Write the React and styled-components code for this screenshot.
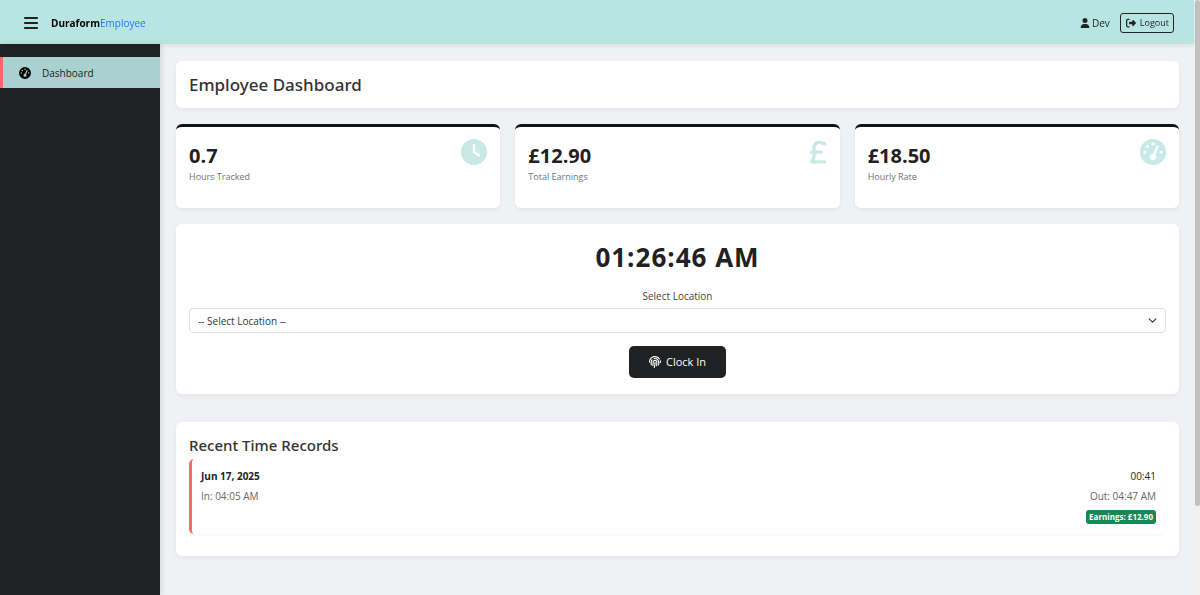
import React from 'react';
import styled, { createGlobalStyle } from 'styled-components';
import {
  FaBars,
  FaUser,
  FaRightFromBracket,
  FaGaugeHigh,
  FaClock,
} from 'react-icons/fa6';
import { FaFingerprint } from 'react-icons/fa';

const GlobalStyle = createGlobalStyle`
  *, *::before, *::after { box-sizing: border-box; }
  body {
    margin: 0;
    background: #eff1f5;
    color: #212529;
    font-family: "Open Sans", "Noto Sans", sans-serif;
    font-size: 10px;
    line-height: 16px;
  }
  h1, h2, p { margin: 0; }
  button, select { font: inherit; color: inherit; }
`;

const Page = styled.div`
  min-height: 100vh;
  padding-right: 6px;
  display: flex;
  flex-direction: column;
`;

const ScrollTrack = styled.div`
  position: fixed;
  top: 0;
  right: 0;
  bottom: 0;
  width: 6px;
  background: #f1f1f1;
`;

const ScrollThumb = styled.div`
  width: 5px;
  margin-left: 1px;
  height: 85%;
  border-radius: 3px;
  background: #c1c1c1;
`;

const Header = styled.header`
  position: relative;
  z-index: 1;
  display: flex;
  align-items: center;
  justify-content: space-between;
  height: 44px;
  padding: 1px 20px 0 23px;
  background: #b8e4e2;
  box-shadow: 0 2px 4px rgba(0, 0, 0, 0.08);
`;

const HeaderGroup = styled.div`
  display: flex;
  align-items: center;
  gap: ${(p) => p.$gap}px;
`;

const MenuButton = styled.button`
  display: flex;
  padding: 0;
  border: 0;
  background: none;
  color: #1f2122;
  font-size: 16px;
`;

const Brand = styled.a`
  color: #000;
  font-weight: 700;
  text-decoration: none;

  span {
    color: #1a7af8;
    font-weight: 400;
  }
`;

const User = styled.span`
  display: flex;
  align-items: center;
  gap: 2px;
`;

const LogoutButton = styled.button`
  display: flex;
  align-items: center;
  gap: 4px;
  height: 20px;
  padding: 0 4px 0 5px;
  border: 1px solid #212529;
  border-radius: 3px;
  background: none;
  font-size: 9px;

  svg { font-size: 10px; }
`;

const Body = styled.div`
  flex: 1;
  display: flex;
`;

const Sidebar = styled.nav`
  position: relative;
  z-index: 2;
  flex: 0 0 160px;
  padding-top: 13px;
  background: #1f2122;
  box-shadow: 2px 0 5px rgba(0, 0, 0, 0.1);
`;

const NavLink = styled.a`
  display: flex;
  align-items: center;
  gap: 11px;
  height: 31px;
  padding-left: 16px;
  border-left: 3px solid #ff6b6b;
  background: #a8d1cf;
  color: #1f2122;
  text-decoration: none;

  svg { font-size: 12px; color: #000; }
`;

const Main = styled.main`
  flex: 1;
  min-width: 0;
  display: flex;
  flex-direction: column;
  gap: 16px;
  padding: 17px 15px 16px 16px;
`;

const Card = styled.section`
  padding: 12px 13px;
  border-radius: 6px;
  background: #fff;
  box-shadow: 0 2px 5px rgba(0, 0, 0, 0.05);
`;

const Title = styled.h1`
  color: #333;
  font-family: "Noto Sans", "Open Sans", sans-serif;
  font-size: 17px;
  font-weight: 500;
  line-height: 23px;
`;

const Stats = styled.div`
  display: grid;
  grid-template-columns: repeat(3, 1fr);
  gap: 15px;
`;

const StatCard = styled(Card)`
  display: flex;
  justify-content: space-between;
  align-items: flex-start;
  min-height: 84px;
  border-top: 3px solid #111315;

  > svg { width: auto; height: 26px; color: #c8e9e8; }
`;

const StatValue = styled.p`
  color: #1f2122;
  font-size: 20px;
  font-weight: 700;
  line-height: 24px;
  padding-top: 5px;
`;

const StatLabel = styled.p`
  color: #6c757d;
  font-size: 9px;
  line-height: 18px;
`;

const ClockCard = styled(Card)`
  display: flex;
  flex-direction: column;
  align-items: center;
  padding: 16px 13px;
  margin-bottom: 12px;
`;

const Time = styled.p`
  color: #1f2122;
  font-size: 26px;
  font-weight: 700;
  letter-spacing: 1px;
  line-height: 34px;
  margin-bottom: 14px;
`;

const Label = styled.label`
  color: #444;
  margin-bottom: 4px;
`;

const SelectBox = styled.select`
  width: 100%;
  height: 25px;
  padding: 0 8px;
  border: 1px solid #dee2e6;
  border-radius: 4px;
  appearance: none;
  color: #333;
  background: #fff
    url("data:image/svg+xml,%3Csvg xmlns='http://www.w3.org/2000/svg' viewBox='0 0 16 16'%3E%3Cpath fill='none' stroke='%23343a40' stroke-linecap='round' stroke-linejoin='round' stroke-width='2' d='m2 5 6 6 6-6'/%3E%3C/svg%3E")
    no-repeat right 8px center / 9px 9px;
`;

const ClockButton = styled.button`
  display: flex;
  align-items: center;
  justify-content: center;
  gap: 5px;
  height: 32px;
  margin-top: 13px;
  padding: 0 20px;
  border: 0;
  border-radius: 5px;
  background: #1f2122;
  color: #fff;
  font-size: 11px;

  svg { font-size: 12px; }
`;

const RecordsCard = styled(Card)`
  padding: 13px 13px 22px;
`;

const SectionTitle = styled.h2`
  color: #333;
  font-family: "Noto Sans", "Open Sans", sans-serif;
  font-size: 15px;
  font-weight: 500;
  line-height: 20px;
  margin-bottom: 4px;
`;

const Record = styled.article`
  display: flex;
  justify-content: space-between;
  padding: 9px 10px 10px 9px;
  border-left: 3px solid #ff6b6b;
  border-radius: 5px;
  box-shadow: 0 1px 2px rgba(0, 0, 0, 0.05);
`;

const RecordColumn = styled.div`
  display: flex;
  flex-direction: column;
  align-items: ${(p) => p.$align};
  gap: 4px;
`;

const RecordMeta = styled.span`
  color: #666;
`;

const Badge = styled.span`
  margin-top: 2px;
  padding: 0 3px;
  border-radius: 3px;
  background: #198754;
  color: #fff;
  font-size: 8px;
  font-weight: 700;
  line-height: 14px;
`;

const PoundIcon = () => (
  <svg viewBox="0 0 320 512" fill="currentColor" aria-hidden="true">
    <path d="M112 160.4c0-35.5 28.8-64.4 64.4-64.4c6.9 0 13.8 1.1 20.4 3.3l81.2 27.1c16.8 5.6 34.9-3.5 40.5-20.2s-3.5-34.9-20.2-40.5L217 38.6c-13.1-4.4-26.8-6.6-40.6-6.6C105.5 32 48 89.5 48 160.4V224H32c-17.7 0-32 14.3-32 32s14.3 32 32 32H48v44.5c0 17.4-4.7 34.5-13.7 49.4L4.6 431.5c-5.9 9.9-6.1 22.2-.4 32.2S20.5 480 32 480H288c17.7 0 32-14.3 32-32s-14.3-32-32-32H88.5l.7-1.1C104.1 390 112 361.5 112 332.5V288H224c17.7 0 32-14.3 32-32s-14.3-32-32-32H112V160.4z" />
  </svg>
);

const stats = [
  { value: '0.7', label: 'Hours Tracked', Icon: FaClock },
  { value: '£12.90', label: 'Total Earnings', Icon: PoundIcon },
  { value: '£18.50', label: 'Hourly Rate', Icon: FaGaugeHigh },
];

export default function App() {
  return (
    <>
      <GlobalStyle />
      <Page>
        <Header>
          <HeaderGroup $gap={12}>
            <MenuButton type="button" aria-label="Toggle menu">
              <FaBars />
            </MenuButton>
            <Brand href="#home">
              Duraform<span>Employee</span>
            </Brand>
          </HeaderGroup>
          <HeaderGroup $gap={10}>
            <User>
              <FaUser />
              Dev
            </User>
            <LogoutButton type="button">
              <FaRightFromBracket />
              Logout
            </LogoutButton>
          </HeaderGroup>
        </Header>
        <Body>
          <Sidebar>
            <NavLink href="#dashboard">
              <FaGaugeHigh />
              Dashboard
            </NavLink>
          </Sidebar>
          <Main>
            <Card>
              <Title>Employee Dashboard</Title>
            </Card>
            <Stats>
              {stats.map(({ value, label, Icon }) => (
                <StatCard key={label}>
                  <div>
                    <StatValue>{value}</StatValue>
                    <StatLabel>{label}</StatLabel>
                  </div>
                  <Icon />
                </StatCard>
              ))}
            </Stats>
            <ClockCard>
              <Time>01:26:46 AM</Time>
              <Label htmlFor="location">Select Location</Label>
              <SelectBox id="location">
                <option>-- Select Location --</option>
              </SelectBox>
              <ClockButton type="button">
                <FaFingerprint />
                Clock In
              </ClockButton>
            </ClockCard>
            <RecordsCard>
              <SectionTitle>Recent Time Records</SectionTitle>
              <Record>
                <RecordColumn $align="flex-start">
                  <strong>Jun 17, 2025</strong>
                  <RecordMeta>In: 04:05 AM</RecordMeta>
                </RecordColumn>
                <RecordColumn $align="flex-end">
                  <span>00:41</span>
                  <RecordMeta>Out: 04:47 AM</RecordMeta>
                  <Badge>Earnings: £12.90</Badge>
                </RecordColumn>
              </Record>
            </RecordsCard>
          </Main>
        </Body>
      </Page>
      <ScrollTrack aria-hidden="true">
        <ScrollThumb />
      </ScrollTrack>
    </>
  );
}
